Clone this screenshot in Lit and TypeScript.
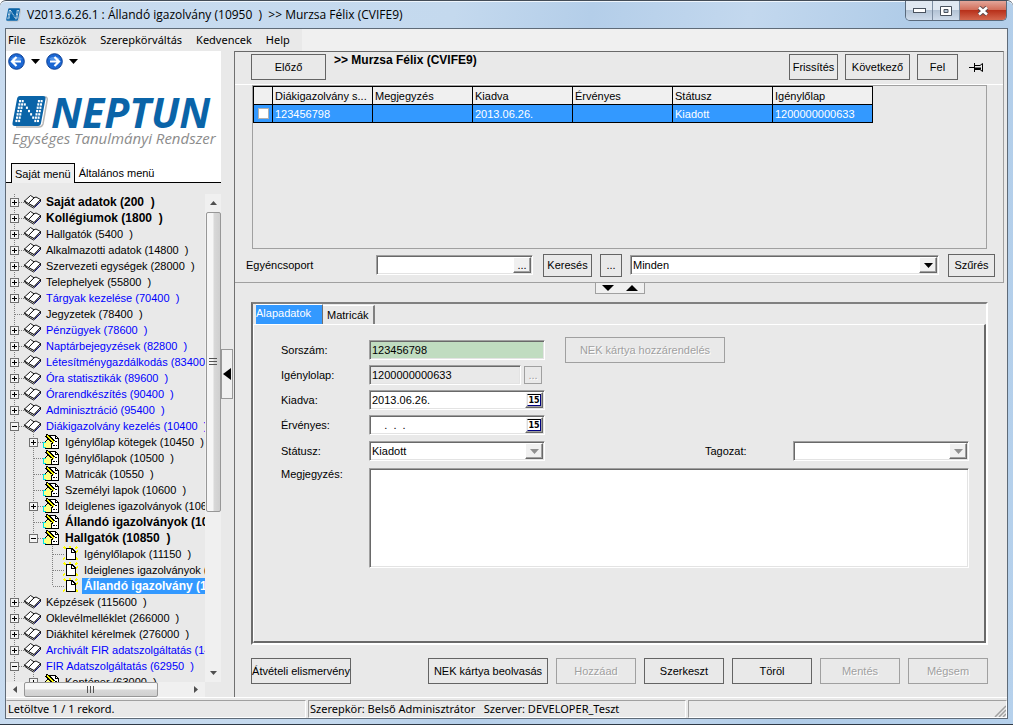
import { LitElement, html, svg, css, nothing } from "lit";
import { customElement } from "lit/decorators.js";

type Icon = "book" | "form" | "page";
interface Node {
  text: string;
  level?: number;
  box?: "plus" | "minus";
  tone?: "link" | "strong" | "current";
  last?: boolean;
}

const NODES: Node[] = [
  { text: "Saját adatok (200  )", box: "plus", tone: "strong" },
  { text: "Kollégiumok (1800  )", box: "plus", tone: "strong" },
  { text: "Hallgatók (5400  )", box: "plus" },
  { text: "Alkalmazotti adatok (14800  )", box: "plus" },
  { text: "Szervezeti egységek (28000  )", box: "plus" },
  { text: "Telephelyek (55800  )", box: "plus" },
  { text: "Tárgyak kezelése (70400  )", box: "plus", tone: "link" },
  { text: "Jegyzetek (78400  )" },
  { text: "Pénzügyek (78600  )", box: "plus", tone: "link" },
  { text: "Naptárbejegyzések (82800  )", box: "plus", tone: "link" },
  { text: "Létesítménygazdálkodás (83400  )", box: "plus", tone: "link" },
  { text: "Óra statisztikák (89600  )", box: "plus", tone: "link" },
  { text: "Órarendkészítés (90400  )", box: "plus", tone: "link" },
  { text: "Adminisztráció (95400  )", box: "plus", tone: "link" },
  { text: "Diákigazolvány kezelés (10400  )", box: "minus", tone: "link" },
  { text: "Igénylőlap kötegek (10450  )", level: 1, box: "plus" },
  { text: "Igénylőlapok (10500  )", level: 1 },
  { text: "Matricák (10550  )", level: 1 },
  { text: "Személyi lapok (10600  )", level: 1 },
  { text: "Ideiglenes igazolványok (10650  )", level: 1, box: "plus" },
  { text: "Állandó igazolványok (10700  )", level: 1, tone: "strong" },
  { text: "Hallgatók (10850  )", level: 1, box: "minus", tone: "strong", last: true },
  { text: "Igénylőlapok (11150  )", level: 2 },
  { text: "Ideiglenes igazolványok (10900  )", level: 2 },
  { text: "Állandó igazolvány (10950  )", level: 2, tone: "current", last: true },
  { text: "Képzések (115600  )", box: "plus" },
  { text: "Oklevélmelléklet (266000  )", box: "plus" },
  { text: "Diákhitel kérelmek (276000  )", box: "plus" },
  { text: "Archivált FIR adatszolgáltatás (14000  )", box: "plus", tone: "link" },
  { text: "FIR Adatszolgáltatás (62950  )", box: "minus", tone: "link" },
  { text: "Konténer (63000  )", level: 1, box: "plus" },
];

const shapes: Record<Icon, unknown> = {
  book: svg`
    <g stroke-width=".9" stroke-linejoin="round" shape-rendering="auto">
    <path d="M.5 5.800 L1 7.500 L4.500 10 L9.500 13 L16.500 6.500 V4.500 L10 11.500 Z" fill="#fff" stroke="#000"/>
    <path d="M10.500 12.500 L16.500 6.500" stroke="#00007c" fill="none"/>
    <path d="M4.500 8.500 L10 2.800 L12 2 L16.500 4.500 L10 11.500 Z" fill="#fff" stroke="#000"/>
    <path d="M.5 6 L6.500 .5 L10 2.800 L4.500 8.500 Z" fill="#fff" stroke="#000"/></g>`,
  form: svg`
    <path d="M5.500 1.500 H12.500 L15.500 4.500 V14.500 H5.500 Z" fill="#fff" stroke="#000"/>
    <path d="M12.500 1.500 V4.500 H15.500" stroke="#000" fill="none"/>
    <path d="M9 7.500 H14 M10 11.500 H14" stroke="#000" fill="none" stroke-dasharray="2 1"/>
    <path d="M1 8 L4 5 H9 L11 8 L8 10 V14 H1 Z" fill="#ffff80" stroke="none"/>
    <path d="M2 7.500 L5 5.500 M10.500 8.500 L8 10.500 V14.500 H2" stroke="#000" fill="none"/>
    <path d="M3 1 L11 8" stroke="#000" stroke-width="4"/>
    <path d="M4 2 L11 8" stroke="#ffff00" stroke-width="1.500"/>
    <path d="M.5 8 V14 M1 8H3 M1 13.500H3" stroke="#00e5e5"/>`,
  page: svg`
    <path d="M1 1 L3 3 M14 1 L12 3 M7 0 V2 M15 5 L13 6 M0 13 L2 12 M15 14 L13 12" stroke="#ffff00" stroke-width="2"/>
    <path d="M3.500 2.500 H9 L12.500 6 V13.500 H3.500 Z" fill="#fff" stroke="#000"/>
    <path d="M8.500 2.500 V6.500 H12.500" fill="none" stroke="#000"/>`,
};

const down = html`<svg width="9" height="5" viewBox="0 0 9 5" aria-hidden="true"><path d="M0 0H9L4.500 5Z" fill="currentColor"/></svg>`;
const dots = [0, 1, 2, 3, 4, 5, 6].map((row) =>
  [0, 1, 2, 3, 4, 5, 6, 7, 8].filter((col) => col < 2 || col > 6 || Math.abs(col - 1 - row) < 1).map(
    (col) => svg`<rect x=${7 + col * 2.7 - row * 0.6} y=${4 + row * 3.3} width="2" height="2.3" fill="#fff"/>`,
  ),
);
const brand = svg`
  <path d="M9 1H33Q36 1 35 5L31 28Q30 31 27 31H4" fill="none" stroke="#b8b8b8" stroke-width="1.500"/>
  <path d="M8 0H31Q34 0 33.500 3L29 27Q28.500 30 26 30H3Q0 30 .5 27L5 3Q5.500 0 8 0Z" fill="#0a64a8"/>
  ${dots}`;

@customElement("menu-tree")
class MenuTree extends LitElement {
  static styles = css`
    :host { display: block; overflow: hidden; }
    ul { list-style: none; margin: 0; padding: 0; }
    li { display: flex; height: 16px; white-space: pre; }
    svg { flex: none; shape-rendering: crispEdges; }
    a { color: #000; text-decoration: none; line-height: 16px; padding: 0 2px; }
    .link { color: #00f; }
    .strong { font-weight: bold; font-size: 12px; }
    .current { font-weight: bold; font-size: 12px; color: #fff; background: #39f; }
  `;

  private gutter(node: Node) {
    const level = node.level ?? 0;
    const axis = 8.5 + 19 * level;
    const icon = (["book", "form", "page"] as Icon[])[level];
    const dotted = (x: number, end = 16) =>
      svg`<path d="M${x} 0V${end}" stroke="#808080" stroke-dasharray="1 1"/>`;
    return html`<svg width=${38 + 19 * level} height="16" aria-hidden="true">
      ${level > 0 ? dotted(8.5) : nothing}
      ${dotted(axis, node.last ? 8 : 16)}
      <path d="M${axis} 8.500H${axis + 11}" stroke="#808080" stroke-dasharray="1 1"/>
      ${node.box
        ? svg`<rect x=${axis - 4} y="4.500" width="8" height="8" fill="#f4f4f4" stroke="#707070"/>
            <path d="M${axis - 2.5} 8.500h5 ${node.box === "plus" ? `M${axis} 6v5` : ""}" stroke="#000"/>`
        : nothing}
      <g transform="translate(${level === 2 ? 57 : 18 + 19 * level} ${level === 0 ? 1 : 0})">${shapes[icon]}</g>
    </svg>`;
  }

  render() {
    return html`<ul>
      ${NODES.map((n) => html`<li>${this.gutter(n)}<a href="#" class=${n.tone ?? ""}>${n.text}</a></li>`)}
    </ul>`;
  }
}

@customElement("app-root")
class AppRoot extends LitElement {
  static styles = css`
    :host {
      display: block;
      font-family: "Liberation Sans", Arial, sans-serif;
      font-size: 11px;
      color: #000;
    }
    * { box-sizing: border-box; }
    button, input, select, textarea { font: inherit; color: inherit; margin: 0; padding: 0; border: 0; border-radius: 0; background: none; outline: 0; }
    svg { display: block; flex: none; }

    .window {
      display: flex; flex-direction: column; min-height: 100vh;
      padding: 0 6px 7px;
      background: linear-gradient(100deg, #c9dcf0 0, #c4d9ee 40%, #b4cee9 52%, #c3d8ee 66%, #b0cce8 80%, #b6d1ec 100%);
      border-top: 1px solid #444d58;
      border-radius: 6px 6px 0 0;
      box-shadow: inset 0 -1px #303a46, inset 0 1px #eef5fc;
    }
    .title { display: flex; align-items: center; height: 28px; gap: 6px; font: 12px "Open Sans", sans-serif; white-space: pre; }
    .title h1 { flex: 1; font: inherit; margin: 0; padding-bottom: 1px; }
    .caption { display: flex; align-self: flex-start; border: 1px solid #5a6a7c; border-top: 0; border-radius: 0 0 5px 5px; overflow: hidden; }
    .caption button { display: grid; place-items: center; width: 27px; height: 19px; background: linear-gradient(#e0e8f1 45%, #b3c3d5 50%, #cfdceb); border-right: 1px solid #7d8ea2; }
    .caption .close { width: 46px; border: 0; background: linear-gradient(#e3a69a 0, #d3705c 45%, #b8311b 50%, #d4674e); }

    .client { flex: 1; display: flex; flex-direction: column; background: #e9e9e9; box-shadow: 0 0 0 1px #5f6b78; }
    .menu { display: flex; height: 22px; background: #f0f0f0; font: 11px "Noto Sans", sans-serif; }
    .menu div { display: flex; gap: 14px; padding: 0 12px 2px 2px; background: #e9e9e9; align-items: center; }

    .body { flex: 1; display: flex; min-height: 0; }
    aside { width: 215px; flex: none; display: flex; flex-direction: column; background: #fff; }
    .nav { display: flex; align-items: center; gap: 6px; height: 20px; padding: 0 2px; }
    .nav button { display: flex; align-items: center; gap: 6px; }
    .logo { padding: 23px 0 0 6px; height: 92px; color: #0a64a8; }
    .logo-row { display: flex; align-items: center; gap: 3px; height: 36px; }
    .logo b { font: italic bold 41px/36px "Open Sans", sans-serif; }
    .logo i { display: block; font: italic 15px/17px "Open Sans", sans-serif; color: #8c8c8c; white-space: nowrap; }
    .side-tabs { display: flex; height: 20px; padding-left: 5px; border-bottom: 1px solid #000; }
    .side-tabs button { padding: 0 4px; height: 20px; }
    .side-tabs .on { background: #f0f0f0; border: 1px solid #000; border-bottom: 0; padding: 0 3px; }
    .tree { flex: 1 1 0; min-height: 0; display: grid; grid-template: minmax(0, 1fr) 15px / minmax(0, 1fr) 16px; padding-top: 11px; background: #e9e9e9; }
    .bar { display: flex; align-items: center; justify-content: space-between; background: #f0f0f0; color: #505050; }
    .bar.v { flex-direction: column; padding: 7px 0; }
    .bar.h { padding: 0 7px; }
    .thumb { display: grid; place-items: center; border: 1px solid #979797; border-radius: 2px; }
    .v .thumb { width: 15px; height: 300px; margin: 7px 0 auto; background: linear-gradient(90deg, #f6f6f6 45%, #d8d8d8 55%, #cfcfcf); }
    .h .thumb { height: 15px; width: 134px; margin: 0 auto 0 7px; background: linear-gradient(#f6f6f6 45%, #d8d8d8 55%, #cfcfcf); }

    .fold { width: 13px; flex: none; display: flex; align-items: center; }
    .fold button { display: grid; place-items: center; width: 12px; height: 50px; border: 1px solid #999; background: #f0f0f0; }

    main { flex: 1; min-width: 0; display: flex; flex-direction: column; border-left: 1px solid #707070; }
    .top { border: 1px solid; border-left: 0; border-color: #696969 #a0a0a0 #a0a0a0; margin-right: 3px; display: flex; flex-direction: column; }
    .crumb { display: flex; align-items: flex-start; height: 33px; padding: 2px 13px 0 16px; gap: 7px; border-bottom: 1px solid #fff; }
    .crumb strong { flex: 1; font-size: 12px; line-height: 12px; padding-left: 1px; }
    .btn { height: 26px; border: 1px solid #646464; display: grid; place-items: center; }
    .btn:disabled { border-color: #a0a0a0; color: #a0a0a0; text-shadow: 1px 1px #fff; }
    .grid { height: 164px; margin: 0 16px 0 17px; border: 1px solid #a0a0a0; }
    table { border-collapse: collapse; table-layout: fixed; width: 620px; }
    th, td { border: 1px solid #000; height: 18px; padding: 0 2px; font-weight: normal; text-align: left; line-height: 16px; white-space: nowrap; }
    th { background: #f0f0f0; }
    td { background: #39f; color: #fff; }
    td input { appearance: none; display: block; width: 11px; height: 11px; margin: auto; background: #fff; border: 1px solid #b0b0b0; }
    .search { display: flex; align-items: center; height: 33px; padding: 0 8px 1px 11px; }
    .search label { width: 130px; }
    .search .btn { height: 23px; }

    .sunk { display: flex; height: 20px; padding: 1px; background: #fff; border: 1px solid; border-color: #a0a0a0 #fff #fff #a0a0a0; box-shadow: inset 1px 1px #696969, inset -1px -1px #e3e3e3; }
    .sunk input, .sunk select { flex: 1; min-width: 0; appearance: none; padding: 0 1px; white-space: pre; }
    .knob { width: 18px; flex: none; display: grid; place-items: center; background: #f0f0f0; border: 1px solid; border-color: #fff #696969 #696969 #fff; box-shadow: inset -1px -1px #a0a0a0; }
    .off .knob { color: #909090; }
    .day { font: bold 8px/9px "DejaVu Sans", sans-serif; border: 1px solid; border-color: #000 #000080 #000080 #ddd; width: 14px; height: 12px; background: #fff; display: grid; place-items: center; }

    .split { align-self: center; display: flex; justify-content: space-around; align-items: center; width: 50px; height: 11px; margin: 0 2px 8px 0; border: 1px solid #a0a0a0; border-top: 0; background: #f0f0f0; }
    .sheet { flex: 1; margin: 0 19px 0 16px; border: 2px solid; border-color: #808080 #fff #fff #6c6c6c; display: flex; flex-direction: column; }
    .tabs { display: flex; height: 20px; padding-left: 3px; align-items: flex-end; }
    .tabs button { height: 19px; border-right: 2px solid #808080; border-top: 1px solid #fff; padding: 0 4px; }
    .tabs .on { width: 67px; padding: 0 0 3px; text-align: left; background: #39f; color: #fff; border-right: 1px solid #707070; height: 20px; }
    .form { flex: 1; border: 1px solid; border-color: #fff #696969 #696969 #fff; border-right-width: 2px; border-bottom-width: 2px; padding: 15px 15px 0 27px; display: flex; flex-direction: column; gap: 5px; }
    .line { display: flex; min-height: 20px; align-items: center; }
    .line > label { width: 88px; flex: none; }
    .line .sunk { width: 176px; }
    .line .short { width: 152px; }
    .line.gap { padding-top: 1px; }
    .line .far { margin-left: auto; }
    .nek { width: 160px; margin: -3px 0 -3px 20px; }
    .mini { width: 18px; height: 18px; margin-left: 3px; }
    .line.note { align-items: flex-start; padding-top: 2px; }
    .note .sunk { flex: 1; height: 100px; }
    .note textarea { flex: 1; resize: none; }

    .actions { display: flex; gap: 8px; padding: 13px 19px 13px 16px; }
    .actions .btn { width: 80px; white-space: nowrap; }
    .actions .first { width: 100px; margin-right: auto; }
    .actions .wide { width: 120px; }

    footer { display: flex; gap: 2px; height: 21px; padding-top: 2px; border-top: 1px solid #fff; font: 11px/15px "Noto Sans", sans-serif; white-space: pre; }
    footer div { border: 1px solid; border-color: #a0a0a0 #fff #fff #a0a0a0; padding-left: 1px; }
    footer .cell-a { width: 300px; border-left-color: transparent; }
    .cell-b { width: 378px; }
    .cell-c { flex: 1; display: flex; justify-content: flex-end; align-items: flex-end; }
  `;

  private arrow(flip: boolean) {
    return html`<svg width="17" height="17" viewBox="0 0 17 17" aria-hidden="true">
      <circle cx="8.500" cy="8.500" r="7.800" fill="#1c68d4" stroke="#0d3f94"/>
      <path d="M3 6a6.500 5 0 0 1 11 0q-5 3-11 0" fill="#6ba8f2" opacity=".7"/>
      <path transform=${flip ? "translate(17 0) scale(-1 1)" : ""} d="M8.500 4 4 8.500 8.500 13M4.500 8.500H13" fill="none" stroke="#fff" stroke-width="2.200"/>
    </svg>`;
  }

  private select(id: string, value: string, off = false) {
    return html`<span class="sunk ${off ? "off" : ""}">
      <select id=${id} aria-label=${id}><option>${value}</option></select>
      <span class="knob">${down}</span>
    </span>`;
  }

  private date(id: string, value: string) {
    return html`<span class="sunk"><input id=${id} .value=${value} /><button class="knob" aria-label="Naptár"><span class="day">15</span></button></span>`;
  }

  render() {
    return html`<div class="window">
      <header class="title">
        <svg width="15" height="14" viewBox="0 0 36 32" aria-hidden="true">${brand}</svg>
        <h1>V2013.6.26.1 : Állandó igazolvány (10950  )  &gt;&gt; Murzsa Félix (CVIFE9)</h1>
        <div class="caption">
          <button aria-label="Kis méret"><svg width="13" height="5"><rect x=".5" y=".5" width="12" height="4" fill="#fff" stroke="#49525e"/></svg></button>
          <button aria-label="Teljes méret"><svg width="12" height="10"><path d="M.5.500h11v9h-11z M4 3.500h4v3h-4z" fill="#fff" stroke="#49525e" fill-rule="evenodd"/></svg></button>
          <button class="close" aria-label="Bezárás"><svg width="12" height="10"><path d="M2 1.500 10 8.500M10 1.500 2 8.500" stroke="#5d4a4c" stroke-width="4.500"/><path d="M2 1.500 10 8.500M10 1.500 2 8.500" stroke="#fff" stroke-width="2.600"/></svg></button>
        </div>
      </header>

      <div class="client">
        <nav class="menu"><div>
          ${["File", "Eszközök", "Szerepkörváltás", "Kedvencek", "Help"].map((m) => html`<button>${m}</button>`)}
        </div></nav>

        <div class="body">
          <aside>
            <div class="nav">
              <button aria-label="Vissza">${this.arrow(false)}${down}</button>
              <button aria-label="Előre">${this.arrow(true)}${down}</button>
            </div>
            <div class="logo">
              <div class="logo-row"><svg width="36" height="32" viewBox="0 0 36 32" aria-hidden="true">${brand}</svg><b>NEPTUN</b></div>
              <i>Egységes Tanulmányi Rendszer</i>
            </div>
            <div class="side-tabs"><button class="on">Saját menü</button><button>Általános menü</button></div>
            <div class="tree">
              <menu-tree></menu-tree>
              <div class="bar v">
                <svg width="7" height="4"><path d="M0 4H7L3.500 0Z" fill="currentColor"/></svg>
                <div class="thumb"><svg width="8" height="8"><path d="M0 .5H8M0 3.500H8M0 6.500H8" stroke="#555"/></svg></div>
                <svg width="7" height="4"><path d="M0 0H7L3.500 4Z" fill="currentColor"/></svg>
              </div>
              <div class="bar h">
                <svg width="4" height="7"><path d="M4 0V7L0 3.500Z" fill="currentColor"/></svg>
                <div class="thumb"><svg width="8" height="7"><path d="M.5 0V7M3.500 0V7M6.500 0V7" stroke="#555"/></svg></div>
                <svg width="4" height="7"><path d="M0 0V7L4 3.500Z" fill="currentColor"/></svg>
              </div>
            </div>
          </aside>

          <div class="fold"><button aria-label="Menü elrejtése"><svg width="8" height="12"><path d="M8 0V12L0 6Z"/></svg></button></div>

          <main>
            <section class="top">
              <div class="crumb">
                <button class="btn" style="width:75px">Előző</button>
                <strong>&gt;&gt; Murzsa Félix (CVIFE9)</strong>
                <button class="btn" style="width:49px">Frissítés</button>
                <button class="btn" style="width:65px">Következő</button>
                <button class="btn" style="width:41px">Fel</button>
                <svg width="25" height="26" aria-hidden="true"><path d="M4 13.500H9" stroke="#000"/><path d="M9.500 9V18M10 11.500H15L17.500 9.500V17.500L15 15.500H10" fill="none" stroke="#000"/><path d="M10 14.500H16" stroke="#000" stroke-width="2"/></svg>
              </div>
              <div class="grid">
                <table>
                  <colgroup><col style="width:19px"/>${[1, 2, 3, 4, 5, 6].map(() => html`<col style="width:100px"/>`)}</colgroup>
                  <thead><tr><th></th><th>Diákigazolvány s...</th><th>Megjegyzés</th><th>Kiadva</th><th>Érvényes</th><th>Státusz</th><th>Igénylőlap</th></tr></thead>
                  <tbody><tr><td><input type="checkbox" aria-label="Kijelölés" /></td><td>123456798</td><td></td><td>2013.06.26.</td><td></td><td>Kiadott</td><td>1200000000633</td></tr></tbody>
                </table>
              </div>
              <div class="search">
                <label for="group">Egyéncsoport</label>
                <span class="sunk" style="width:157px"><input id="group" /><button class="knob">...</button></span>
                <button class="btn" style="width:49px;margin-left:10px">Keresés</button>
                <button class="btn" style="width:22px;margin:0 8px">...</button>
                <span style="flex:1;margin-right:9px">${this.select("Szűrő", "Minden")}</span>
                <button class="btn" style="width:47px">Szűrés</button>
              </div>
            </section>

            <div class="split">
              <svg width="12" height="6"><path d="M0 0H12L6 6Z"/></svg>
              <svg width="12" height="6"><path d="M0 6H12L6 0Z"/></svg>
            </div>

            <section class="sheet">
              <div class="tabs"><button class="on">Alapadatok</button><button>Matricák</button></div>
              <div class="form">
                <div class="line"><label for="serial">Sorszám:</label><span class="sunk" style="background:#c0dcc0"><input id="serial" value="123456798" /></span>
                  <button class="btn nek" disabled>NEK kártya hozzárendelés</button></div>
                <div class="line"><label for="claim">Igénylolap:</label><span class="sunk short" style="background:#e9e9e9"><input id="claim" value="1200000000633" readonly /></span>
                  <button class="btn mini" disabled>...</button></div>
                <div class="line"><label for="issued">Kiadva:</label>${this.date("issued", "2013.06.26.")}</div>
                <div class="line"><label for="valid">Érvényes:</label>${this.date("valid", "    .  .  .")}</div>
                <div class="line gap"><label for="status">Státusz:</label>${this.select("status", "Kiadott", true)}
                  <label class="far" for="section">Tagozat:</label>${this.select("section", "", true)}</div>
                <div class="line note"><label for="note">Megjegyzés:</label><span class="sunk"><textarea id="note"></textarea></span></div>
              </div>
            </section>

            <div class="actions">
              <button class="btn first">Átvételi elismervény</button>
              <button class="btn wide">NEK kártya beolvasás</button>
              <button class="btn" disabled>Hozzáad</button>
              <button class="btn">Szerkeszt</button>
              <button class="btn">Töröl</button>
              <button class="btn" disabled>Mentés</button>
              <button class="btn" disabled>Mégsem</button>
            </div>
          </main>
        </div>

        <footer>
          <div class="cell-a">Letöltve 1 / 1 rekord.</div>
          <div class="cell-b">Szerepkör: Belső Adminisztrátor   Szerver: DEVELOPER_Teszt</div>
          <div class="cell-c"><svg width="12" height="12"><path d="M12 1 1 12M12 5 5 12M12 9 9 12" stroke="#a0a0a0" stroke-width="1.500"/></svg></div>
        </footer>
      </div>
    </div>`;
  }
}
